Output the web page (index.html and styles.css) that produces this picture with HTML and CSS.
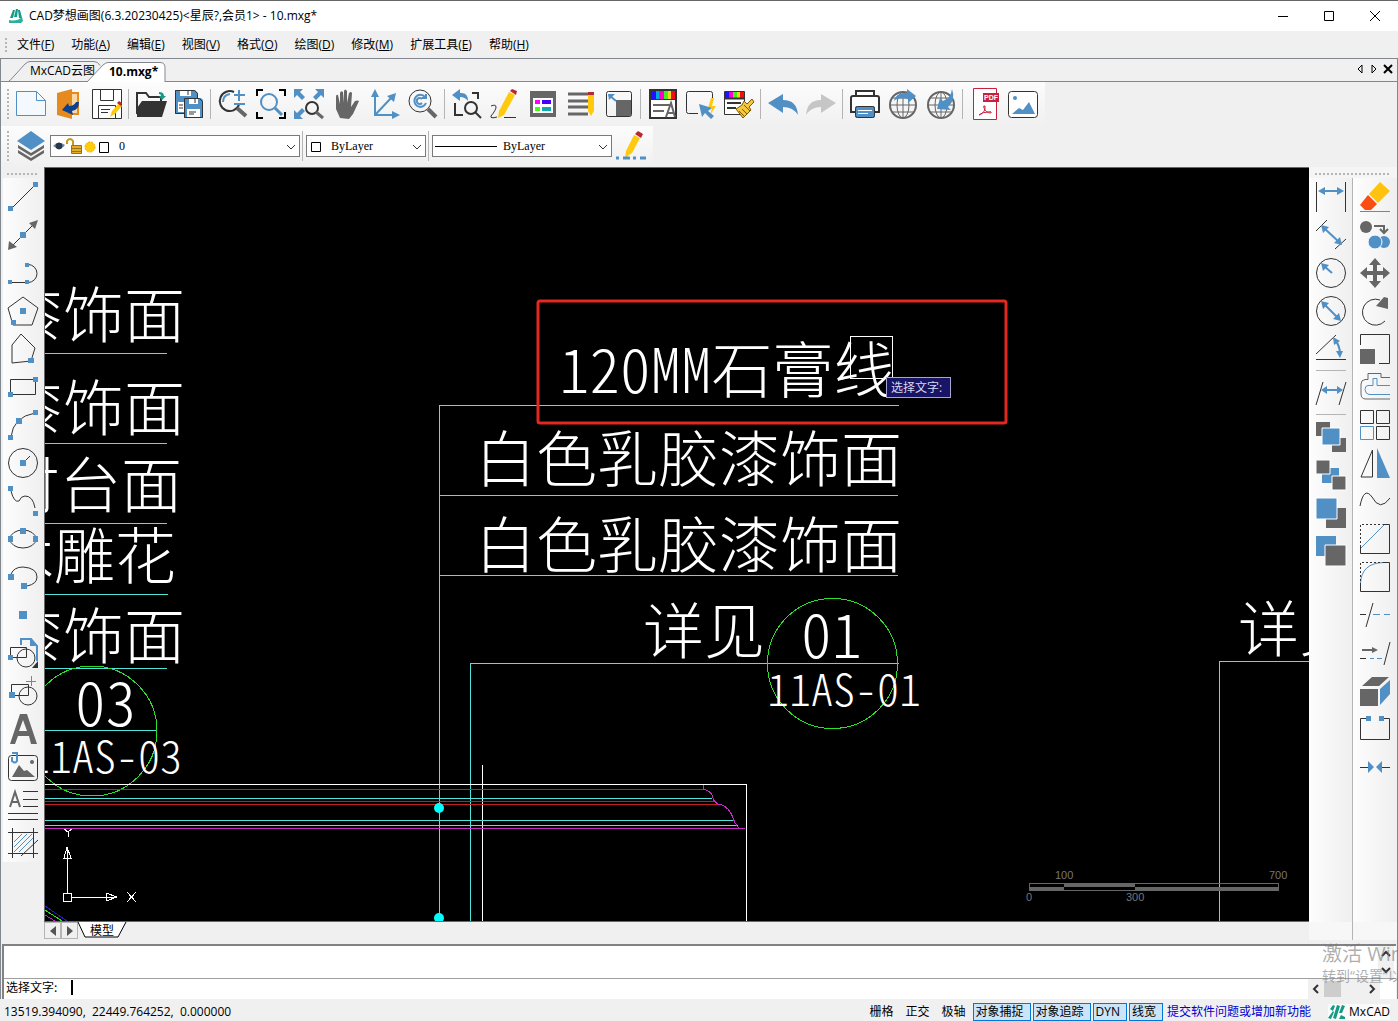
FILE: index.html
```
<!DOCTYPE html>
<html lang="zh-CN">
<head>
  <meta charset="UTF-8">
  <meta name="viewport" content="width=device-width, initial-scale=1.0">
  <title>CAD梦想画图</title>
  <link rel="stylesheet" href="styles.css">
</head>
<body>
  <header class="titlebar">
    <svg class="logo" viewBox="0 0 16 16"><path class="teal" d="M2 10 5 2h2L5 10zM6 9 8 1h2L9 9zM10 2h2l2 8h-3z"/><path class="teal-dark" d="M1 12q8 2 13-3l1 4-2 2H1z"/></svg>
    <h1>CAD梦想画图(6.3.20230425)&lt;星辰?,会员1&gt; - 10.mxg*</h1>
    <div class="window-btns">
      <button title="最小化"><svg viewBox="0 0 12 12"><path d="M1 6.500h10"/></svg></button>
      <button title="最大化"><svg viewBox="0 0 12 12"><path d="M1.500 1.500h9v9h-9z"/></svg></button>
      <button title="关闭"><svg viewBox="0 0 12 12"><path d="m1 1 10 10M11 1 1 11"/></svg></button>
    </div>
  </header>

  <nav class="menubar">
    <span class="grip"></span>
    <button>文件(<u>F</u>)</button>
    <button>功能(<u>A</u>)</button>
    <button>编辑(<u>E</u>)</button>
    <button>视图(<u>V</u>)</button>
    <button>格式(<u>O</u>)</button>
    <button>绘图(<u>D</u>)</button>
    <button>修改(<u>M</u>)</button>
    <button>扩展工具(<u>E</u>)</button>
    <button>帮助(<u>H</u>)</button>
  </nav>

  <div class="frame">
    <div class="tabs">
      <button class="tab"><svg viewBox="0 0 92 20"><path d="M0 19.500h1L16 3q3-2.500 5-2.500h64q4 0 6 4"/></svg><span>MxCAD云图</span></button>
      <button class="tab active"><svg viewBox="0 0 80 20"><path d="M0 20 16 3q3-2.500 5-2.500h52q5 0 5 5V20"/></svg><span>10.mxg*</span></button>
      <div class="tab-nav">
        <button title="上一个"><svg viewBox="0 0 8 10"><path d="M6 1v8L2 5z"/></svg></button>
        <button title="下一个"><svg viewBox="0 0 8 10"><path d="M2 1v8l4-4z"/></svg></button>
        <button title="关闭"><svg viewBox="0 0 8 10"><path class="thick" d="m0 1 8 8M8 1 0 9"/></svg></button>
      </div>
    </div>

    <!-- main toolbar -->
    <div class="toolbar main-tools">
      <span class="grip"></span>
      <button title="新建"><svg viewBox="0 0 30 30"><path class="blue paper" d="M.5 2.500h20l9 9v15H.5zM20.500 2.500v9h9"/></svg></button>
      <button title="打开图纸"><svg viewBox="0 0 30 30"><path d="M18 4h6v21h-6" stroke="#e58a1f" fill="#fbd9a5" stroke-width="2"/><path class="orange" d="M3 4 18 0v30L3 26z"/><path class="navy" d="M25 13q0 8-7 9l1 4-11-5 6-7 1 3q5 0 7-4z"/></svg></button>
      <button title="另存为"><svg viewBox="0 0 30 30"><path fill="#fff" d="M.5.500h29v29H.5z"/><path d="M8.500.500v11h13V.500M6.500 29.500v-13h17v13M9 20.500h9M9 23.500h7"/><path class="yellow" d="m18 28 2-6 7-8 3 3-7 8z"/><path class="red" d="m25 14 2-2 3 2-1 3z"/></svg></button>
      <i class="sep"></i>
      <button title="打开"><svg viewBox="0 0 30 30"><path d="M1 25V4h9l3 4h12v5" stroke-width="2"/><path class="black-fill" d="M6 12h25l-5 16H1V19z"/><path class="teal" d="M23 3q5 0 5 4h2l-4 4-3-4h2q0-2-2-2z"/></svg></button>
      <button title="保存"><svg viewBox="0 0 30 30"><path class="blue-fill" d="M1 1h20l3 3v21H1z"/><path class="blue-fill" stroke="#fff" d="M10 9h17l2 2v18H10z"/><path class="white-fill" d="M6 1h11v6H6zM4 13h7v10H4zM15 9h9v6h-9zM13 20h13v8H13z"/><path d="M1.500 1.500h19l3 3V9M1.500 1.500v23H10M10.500 9.500h15l3 3v16h-18zM14 1v5M21 10v4M15 23h7M15 25h5M5 16h4M5 19h4"/></svg></button>
      <i class="sep"></i>
      <button title="缩放"><svg viewBox="0 0 30 30"><path d="M21 16a10 10 0 1 1-5-13" stroke-width="2"/><path class="blue" d="M5 13q0-7 7-8" stroke-width="2"/><path class="blue" d="M16 6h11M21 1v11M16 15h11" stroke-width="2"/><path class="grey" d="m19 19 9 8" stroke-width="4"/></svg></button>
      <button title="窗口缩放"><svg viewBox="0 0 30 30"><path d="M1 7V1h6M23 1h6v6M29 23v6h-6M7 29H1v-6" stroke="#000" stroke-width="2"/><circle class="blue" cx="13" cy="13" r="8" stroke-width="2"/><path class="blue" d="m19 19 7 7" stroke-width="3"/></svg></button>
      <button title="全部缩放"><svg viewBox="0 0 30 30"><path class="blue-fill" d="M0 0h9L6 3l5 5-3 3-5-5-3 3zM30 0v9l-3-3-5 5-3-3 5-5-3-3zM0 30v-9l3 3 5-5 3 3-5 5 3 3z"/><circle cx="18" cy="19" r="6" stroke-width="2"/><path class="grey" d="m22 23 7 6" stroke-width="3"/></svg></button>
      <button title="平移"><svg viewBox="0 0 30 30"><path class="grey-fill" d="M8 29 4 20V8q0-3 2-2l2 9V4q1-3 3-1l1 11V2q1-3 3 0v12l2-10q2-2 3 0l-1 14 4-6q3-1 4 0l-6 13-4 5z"/></svg></button>
      <button title="坐标"><svg viewBox="0 0 30 30"><path class="blue" d="M5 6v20h19M5 26 22 8" stroke-width="2"/><path class="blue-fill" d="m5 0 4 8H1zM30 26l-8 4v-8zM26 4l-2 9-7-6z"/></svg></button>
      <button title="缩放上一个"><svg viewBox="0 0 30 30"><circle cx="12" cy="12" r="11"/><path class="grey" d="m20 20 8 8" stroke-width="4"/><path class="blue" d="M18 14a6 6 0 1 1-1-6M14 14a3 3 0 1 1 0-4M18 5v4h-4" stroke-width="2"/></svg></button>
      <i class="sep"></i>
      <button title="返回视图"><svg viewBox="0 0 30 30"><path class="blue-fill" d="m0 6 8-6v4q8-1 8 8-3-4-8-4v4z"/><path d="M3 14v12h8M20 4h6v6" stroke-width="2"/><circle cx="19" cy="19" r="6" stroke-width="2"/><path d="m23 23 6 6" stroke-width="2"/></svg></button>
      <button title="编辑"><svg viewBox="0 0 30 30"><path class="yellow" d="m19 3 6 3-11 20-6 3 1-7z"/><path class="red" d="m20 2 2-2 5 2-1 4z"/><path d="M1 17q5-2 5 1T1 27q-1 3 6 1M14 28.500h12"/></svg></button>
      <button title="特性"><svg viewBox="0 0 30 30"><path class="grey-fill" d="M2 2h26v26H2z"/><path class="white-fill" d="M5 9h20v15H5z"/><path fill="#f0f" stroke="none" d="M7 11h5v4H7z"/><path fill="#40f" stroke="none" d="M14 11h9v4h-9z"/><path fill="#4f1" stroke="none" d="M7 18h5v4H7z"/><path fill="#1aa" stroke="none" d="M14 18h9v4h-9z"/></svg></button>
      <button title="线型"><svg viewBox="0 0 30 30"><path class="grey" d="M2 5h20M2 12h20M2 18h20M2 25h20" stroke-width="3"/><path class="yellow" d="M22 6h6v16l-3 5-3-5z"/><path class="red" d="M22 3h6v3h-6z"/></svg></button>
      <button title="比例"><svg viewBox="0 0 30 30"><rect x="2.500" y="2.500" width="25" height="25" rx="2"/><path class="grey-fill" d="M12 11h15v16H12z"/><path class="blue" d="m5 6 7 6" stroke-width="2"/><path class="blue-fill" d="M4 5h7l-6 6z"/></svg></button>
      <i class="sep"></i>
      <button title="文字样式"><svg viewBox="0 0 30 30"><path fill="#fff" stroke-width="2" d="M2 1h26v28H2z"/><path fill="#21f" stroke="none" d="M3 2h5v8H3z"/><path fill="#0ad" stroke="none" d="M8 2h3v8H8z"/><path fill="#f0c" stroke="none" d="M11 2h5v8h-5z"/><path fill="#4e2" stroke="none" d="M16 2h4v8h-4z"/><path fill="#ed1" stroke="none" d="M20 2h3v8h-3z"/><path fill="#e11" stroke="none" d="M23 2h4v8h-4z"/><path d="M2 10.500h26"/><path class="grey" stroke-width="2" d="M5 16h18M5 22h11M18 28l5-14 4 14M20 24h5"/></svg></button>
      <button title="快速选择"><svg viewBox="0 0 30 30"><path d="M12 24.500H2.500q-2 0-2-2v-18q0-2 2-2h22q2 0 2 2V10"/><path class="yellow" d="m25 9-3 10h4l-2 7 6-9h-4l2-8z"/><path class="blue-fill" d="m13 15 13 4-4 3 6 5-3 3-6-6-3 4z"/></svg></button>
      <button title="特性匹配"><svg viewBox="0 0 30 30"><path fill="#fff" d="M.5 2.500h20v23H.5z"/><path fill="#21f" stroke="none" d="M1 3h4v6H1z"/><path fill="#f0c" stroke="none" d="M5 3h4v6H5z"/><path fill="#4e2" stroke="none" d="M9 3h4v6H9z"/><path fill="#ed1" stroke="none" d="M13 3h3v6h-3z"/><path fill="#e11" stroke="none" d="M16 3h4v6h-4z"/><path d="M0 9.500h21M3 14h14M3 19h9" stroke-width="2"/><path fill="#f5c83c" stroke="#7c5900" d="m12 20 6-4 2-4 3 3 5-5 2 3-5 5 2 3-8 8zm3 2 5 5m-2-7 5 5m-3-9 6 6"/></svg></button>
      <i class="sep"></i>
      <button title="撤销"><svg viewBox="0 0 30 30"><path class="blue-fill" d="M0 14 15 5v6q14 0 15 15-5-8-15-8v6z"/></svg></button>
      <button title="重做"><svg viewBox="0 0 30 30"><path fill="#c6c6c6" stroke="none" d="M30 14 15 5v6Q1 11 0 26q5-8 15-8v6z"/></svg></button>
      <i class="sep"></i>
      <button title="打印"><svg viewBox="0 0 30 30"><path fill="#fff" stroke-width="2" d="M6 7V2h18v5M6 23H1V9q0-2 2-2h24q2 0 2 2v14h-5"/><rect class="blue-fill" x="5" y="17" width="20" height="12" rx="2"/><rect x="5.500" y="17.500" width="19" height="11" rx="2"/><path stroke="#fff" d="M8 21.500h14M8 24.500h10"/></svg></button>
      <button title="上传"><svg viewBox="0 0 30 30"><g class="grey"><circle cx="15" cy="16" r="13" stroke-width="2"/><ellipse cx="15" cy="16" rx="6" ry="13"/><path d="M15 3v26M2 16h26M4 9h22M4 23h22"/></g><path class="blue-fill" d="M6 12q2-9 13-8V0l9 7-8 7v-4Q10 8 6 12z"/></svg></button>
      <button title="下载"><svg viewBox="0 0 30 30"><g class="grey"><circle cx="15" cy="16" r="13" stroke-width="2"/><ellipse cx="15" cy="16" rx="6" ry="13"/><path d="M15 3v26M2 16h26M4 9h22M4 23h22"/></g><path class="blue-fill" d="M26 0q4 11-4 18l3 3-14-1 3-11 3 3q8-3 9-12z"/></svg></button>
      <i class="sep"></i>
      <button title="输出PDF"><svg viewBox="0 0 30 30"><path fill="#fff" stroke="#c8203f" d="M3.500-.5h23v31h-23z"/><path fill="#c8203f" stroke="none" d="M13 4h16v9H13z"/><text x="14" y="11">PDF</text><path stroke="#c8203f" d="M9 26q7-3 6-9-2-1-1 2 2 5 7 5 1-2-3-1-5 0-9 3z"/></svg></button>
      <button title="输出图片"><svg viewBox="0 0 30 30"><rect x=".5" y="2.500" width="29" height="26" rx="3" fill="#fff"/><circle class="blue-fill" cx="7" cy="9" r="2"/><path class="blue-fill" d="m4 25 7-6 4 2 6-8 6 12z"/></svg></button>
    </div>

    <!-- layer, colour and line type -->
    <div class="toolbar layer-tools">
      <span class="grip"></span>
      <button title="图层"><svg viewBox="0 0 30 30"><path class="grey-fill" d="m2 19 13 8 13-8v3l-13 8-13-8zM2 14l13 8 13-8v3l-13 8-13-8z"/><path class="blue-fill" d="M15 0 29 10 15 19 1 10z"/></svg></button>
      <div class="combo combo-layer">
        <svg class="combo-icons" viewBox="0 0 60 20"><path fill="#6d8aa9" stroke="none" d="M2 10q5-6 12-1-5 7-12 1z"/><circle cx="8" cy="10" r="3" fill="#223a58"/><path stroke="#c39a22" stroke-width="2" d="M16 8V5q3-4 6 0v5"/><path fill="#e4ad25" stroke="#9a7411" d="M20.500 9.500h10v8h-10zM20 12.500h10M20 15.500h10"/><circle cx="39" cy="11" r="5" fill="#ffcc0c" stroke="#f2a900" stroke-dasharray="2 1"/><path fill="#fff" stroke="#000" d="M48.500 6.500h9v10h-9z"/></svg>
        <select aria-label="图层"><option>0</option></select>
        <svg class="arrow" viewBox="0 0 10 6"><path d="m1 1 4 4 4-4"/></svg>
      </div>
      <i class="sep"></i>
      <div class="combo combo-color">
        <svg class="combo-icons" viewBox="0 0 60 20"><path stroke="#000" d="M4.500 6.500h9v9h-9z"/></svg>
        <select aria-label="颜色"><option>ByLayer</option></select>
        <svg class="arrow" viewBox="0 0 10 6"><path d="m1 1 4 4 4-4"/></svg>
      </div>
      <i class="sep"></i>
      <div class="combo combo-line">
        <svg class="combo-icons" viewBox="0 0 64 20"><path stroke="#000" d="M2 10.500h62"/></svg>
        <select aria-label="线型"><option>ByLayer</option></select>
        <svg class="arrow" viewBox="0 0 10 6"><path d="m1 1 4 4 4-4"/></svg>
      </div>
      <button title="线型编辑"><svg viewBox="0 0 30 30"><path class="yellow" d="m18 4 6 3-8 15-7 5 1-7z"/><path class="red" d="m19 3 3-3 5 3-2 4z"/><path class="blue" stroke-width="3" stroke-dasharray="3 4 7 3" d="M0 27h30"/></svg></button>
    </div>

    <main class="work">
      <!-- drawing tools -->
      <aside class="side side-left">
        <span class="grip-h"></span>
        <div class="col">
          <button title="直线"><svg viewBox="0 0 30 30"><path d="M4 26 26 4"/><path class="blue-fill" d="M0 24h5v5H0zM25 0h5v5h-5z"/></svg></button>
          <button title="构造线"><svg viewBox="0 0 30 30"><path d="M4 26 26 4"/><path class="grey-fill" d="m30 0-3 9-6-6zM0 30l1-9 8 6z"/><path class="blue-fill" d="M12 12h6v6h-6z"/></svg></button>
          <button title="多段线"><svg viewBox="0 0 30 30"><path d="M3 24.500h17a9 9 0 0 0 0-18"/><path class="blue-fill" d="M0 22h4v4H0zM17 22h4v4h-4zM17 5h4v4h-4z"/></svg></button>
          <button title="正多边形"><svg viewBox="0 0 30 30"><path d="M15 1 30 12 24 29H5L0 12z"/><path class="blue-fill" d="M12 12h6v6h-6zM3 24h5v5H3z"/></svg></button>
          <button title="多边形"><svg viewBox="0 0 30 30"><path d="M13 0 27 14 23 27 4 29V11z"/><path class="blue-fill" d="M20 24h6v5h-6z"/></svg></button>
          <button title="矩形"><svg viewBox="0 0 30 30"><path d="M2.500 7.500h25v15h-25z"/><path class="blue-fill" d="M0 20h5v5H0zM25 5h5v5h-5z"/></svg></button>
          <button title="圆弧"><svg viewBox="0 0 30 30"><path d="M3 27Q5 7 27 3"/><path class="blue-fill" d="M0 25h5v5H0zM8 8h6v6H8zM25 0h5v5h-5z"/></svg></button>
          <button title="圆"><svg viewBox="0 0 30 30"><circle cx="15" cy="15" r="14.500"/><path d="m15 15 7-7"/><path class="blue-fill" d="M12 12h6v6h-6z"/></svg></button>
          <button title="样条曲线"><svg viewBox="0 0 30 30"><path d="M3 5q3 12 8 10 2-5 6-5 8 0 10 12"/><path class="blue-fill" d="M0 0h5v5H0zM25 25h5v5h-5z"/></svg></button>
          <button title="椭圆"><svg viewBox="0 0 30 30"><ellipse cx="15" cy="15" rx="13" ry="9"/><path class="blue-fill" d="M12 4h6v6h-6zM0 12h5v6H0zM25 12h5v6h-5z"/></svg></button>
          <button title="椭圆弧"><svg viewBox="0 0 30 30"><path d="M3 12q3-7 12-7 14 1 14 10 0 7-10 9"/><path class="blue-fill" d="M0 12h6v6H0zM13 21h6v6h-6z"/></svg></button>
          <button title="点"><svg viewBox="0 0 30 30"><path class="blue-fill" d="M11 11h8v8h-8z"/></svg></button>
          <button title="插入块"><svg viewBox="0 0 30 30"><path class="blue" stroke-width="2" d="M13 7V1h10l6 7v15"/><path class="blue-fill" d="M22 0v8h8z"/><path d="M2.500 9.500h16v10h-16z"/><circle cx="18" cy="20" r="9"/><path class="blue-fill" d="M0 17h5v5H0z"/><path class="black-fill" d="m30 23-6 7h6z"/></svg></button>
          <button title="创建块"><svg viewBox="0 0 30 30"><path d="M3.500 8.500h17v11h-17z"/><circle cx="20" cy="20" r="9"/><path class="blue" d="M23.500 0v10M18 5.500h10"/><path class="blue-fill" d="M1 16h6v6H1z"/></svg></button>
          <button title="单行文字"><svg viewBox="0 0 30 30"><path class="grey-fill" d="M12 0h7l10 30h-6l-2-8H10l-3 8H2zM15 6l-4 11h8z"/></svg></button>
          <button title="图片"><svg viewBox="0 0 30 30"><rect x=".5" y="3.500" width="29" height="25" rx="3"/><path class="grey-fill" d="m4 25 7-12 5 6 3-1 8 7z"/><circle class="grey-fill" cx="24" cy="10" r="2"/><path class="blue" stroke-width="2" d="M4 1h5v8q-2 3-5 0V5"/></svg></button>
          <button title="多行文字"><svg viewBox="0 0 30 30"><path class="grey" stroke-width="2" d="M2 17 7 2l5 15M4 12h7"/><path d="M15 1.500h15M15 9.500h15M15 16.500h15M0 23.500h30M0 29.500h30"/></svg></button>
          <button title="填充"><svg viewBox="0 0 30 30"><path class="blue" d="m6 14 8-8M6 19 19 6M6 24 24 6M11 24 25 10"/><path d="M4.500 0v30M25.500 0v30M0 4.500h30M0 25.500h30M13 28l17-16"/></svg></button>
        </div>
      </aside>

      <section class="canvas">
        <svg class="drawing">
          
          <g transform="translate(-45 -168)">
            <g class="lines">
              <path class="cyan" d="M45 353.500h122M45 443.500h122M45 523.500h122M45 594.500h123M45 668.500h122M45 730.500h111"/>
              <path class="cyan" d="M439.500 921V405.500h459M439 495.500h459M439 575.500h459M470.500 921V663.500h428M1219.500 921V661.500h400"/>
              <circle class="green" cx="92" cy="731" r="65"/>
              <circle class="green" cx="832.500" cy="663.500" r="65"/>
              <path class="white" d="M45 784.500h701.500v137M482.500 765v156"/>
              <path class="crimson" d="M45 789.500h659M45 801.500h669M45 804.500h673"/>
              <path class="cyan" d="M45 798.500h667M45 820.500h688M45 825.500h693"/>
              <path class="magenta" d="M45 828.500h700M703.500 785v4q9 2 10 11l4 4q12 1 17 18l4 6"/>
              <path class="blue-line" d="m45 906 22 15"/><path class="green" d="m45 910 17 11"/><path class="magenta" d="m45 915 10 6"/>
            </g>
            <g class="nodes"><circle cx="439" cy="808" r="5"/><circle cx="439" cy="918" r="5"/></g>
            <g class="note">
              <text x="2" y="338">漆饰面</text>
              <text x="2" y="431">漆饰面</text>
              <text x="-1" y="508">付台面</text>
              <text x="-7" y="579">木雕花</text>
              <text x="2" y="659">漆饰面</text>
              <text x="559" y="393">120MM石膏线</text>
              <text x="475" y="482">白色乳胶漆饰面</text>
              <text x="475" y="568">白色乳胶漆饰面</text>
              <text x="643" y="654">详见</text>
              <text x="1238" y="652">详见</text>
              <text x="75" y="726">03</text>
              <text x="801" y="658">01</text>
            </g>
            <g class="note sheet">
              <text x="28" y="773">11AS-03</text>
              <text x="767" y="706">11AS-01</text>
            </g>
            <g class="lines white">
              <path d="M63.500 893.500h8v8h-8zM67.500 893v-36M72 897.500h35"/>
              <path d="m64 858 3-11 4 11zM67.500 848v10M106 893l11 4-11 4zM106 897.500h11M64 829l4 3 4-3M68 832v5M127 892l9 10M136 892l-9 10"/>
            </g>
            <path class="pick" d="M850.500 336.500h42v42h-42z"/>
            <rect class="mark" x="538" y="301" width="468" height="122" rx="2"/>
          </g>
        </svg>
        <div class="tip">选择文字:</div>
        <svg class="scale" viewBox="0 0 270 40">
          <path d="M7.500 14.500h249v7h-249z"/>
          <path class="bar" d="M7 18h35v4H7zM42 14h71v4H42zM113 18h144v4H113z"/>
          <text x="33" y="10">100</text><text x="247" y="10">700</text><text x="4" y="32">0</text><text x="104" y="32">300</text>
        </svg>
      </section>

      <!-- dimension and modify tools -->
      <aside class="side side-right">
        <span class="grip-h"></span>
        <div class="cols">
          <div class="col col-dim">
            <button title="线性标注"><svg viewBox="0 0 30 30"><path d="M.5 0v30M29.500 0v30"/><path class="blue" stroke-width="2" d="M6 9h18"/><path class="blue-fill" d="m2 9 7-4v8zM28 9l-7-4v8z"/></svg></button>
            <button title="对齐标注"><svg viewBox="0 0 30 30"><path d="M0 11 11 0M19 29l11-10"/><path class="blue" stroke-width="2" d="m8 8 15 14"/><path class="blue-fill" d="m5 5 8 2-6 6zM26 25l-8-2 6-6z"/></svg></button>
            <button title="半径标注"><svg viewBox="0 0 30 30"><circle cx="15" cy="15" r="14.500"/><path class="blue" stroke-width="2" d="m8 8 8 7"/><path class="blue-fill" d="m5 5 8 2-6 6z"/></svg></button>
            <button title="直径标注"><svg viewBox="0 0 30 30"><circle cx="15" cy="15" r="14.500"/><path class="blue" stroke-width="2" d="m8 8 14 14"/><path class="blue-fill" d="m5 5 8 2-6 6zM25 25l-8-2 6-6z"/></svg></button>
            <button title="角度标注"><svg viewBox="0 0 30 30"><path d="M0 20 20 1M0 25.500h30"/><path class="blue" stroke-width="2" d="M19 6q5 6 5 14"/><path class="blue-fill" d="m17 3 7 4-6 4zM24 24l-4-7h7z"/></svg></button>
            <i class="sep-h"></i>
            <button title="倾斜标注"><svg viewBox="0 0 30 30"><path d="M0 27 7 4M23 27l7-23"/><path class="blue" stroke-width="2" d="M8 12h16"/><path class="blue-fill" d="m5 12 6-4v8zM27 12l-6-4v8z"/></svg></button>
            <i class="sep-h"></i>
            <button title="前置"><svg viewBox="0 0 30 30"><path class="grey-fill" d="M0 0h14v14H0zM16 16h14v14H16z"/><path fill="#5090c5" stroke="#fff" d="M6 6h18v17H6z"/></svg></button>
            <button title="后置"><svg viewBox="0 0 30 30"><path class="blue-fill" d="M6 8h17v15H6z"/><path fill="#666" stroke="#fff" d="M0 0h14v14H0zM16 16h14v14H16z"/></svg></button>
            <button title="置于对象之上"><svg viewBox="0 0 30 30"><path class="grey-fill" d="M10 10h20v20H10z"/><path fill="#5090c5" stroke="#fff" d="M0 0h21v21H0z"/></svg></button>
            <button title="置于对象之下"><svg viewBox="0 0 30 30"><path class="blue-fill" d="M0 0h20v20H0z"/><path fill="#666" stroke="#fff" d="M9 9h21v21H9z"/></svg></button>
          </div>
          <div class="col">
            <button title="删除"><svg viewBox="0 0 30 30"><path fill="#ffc20e" stroke="none" d="M20 0 30 9 18 21 9 12z"/><path fill="#fa4d12" stroke="none" d="m8 13 9 9-6 6H5l-5-5z"/><path class="blue" d="M0 29.500h30"/></svg></button>
            <button title="复制"><svg viewBox="0 0 30 30"><circle class="grey-fill" cx="6" cy="7" r="6"/><path d="M14 6h10v7M20 9l4 4 4-4" stroke-width="2" stroke="#666"/><circle class="blue-fill" cx="24" cy="22" r="6"/><circle cx="15" cy="22" r="7" fill="#5090c5" stroke="#fff"/></svg></button>
            <button title="移动"><svg viewBox="0 0 30 30"><path class="grey-fill" d="m15 0 6 7h-4v6h6V9l7 6-7 6v-4h-6v6h4l-6 7-6-7h4v-6H7v4l-7-6 7-6v4h6V7H9z"/></svg></button>
            <button title="旋转"><svg viewBox="0 0 30 30"><path d="M20 4A13 13 0 1 0 25 25"/><path class="grey-fill" d="m16 10 8-9 4 1v11z"/></svg></button>
            <button title="缩放"><svg viewBox="0 0 30 30"><path class="grey-fill" d="M0 15h15v15H0z"/><path d="M.5 11V.500h29v29H19"/></svg></button>
            <button title="偏移"><svg viewBox="0 0 30 30"><path class="grey" d="M30 5.500h-9v-4H8v6H5Q1 8 1 12v10q0 5 5 5h24"/><path class="blue" d="M30 13.500H17v-7h-4v7H8q-3 0-3 4t4 5h21"/></svg></button>
            <button title="阵列"><svg viewBox="0 0 30 30"><path d="M.5.500h13v13H.5zM16.500.500h13v13h-13zM16.500 16.500h13v13h-13z"/><path class="blue" d="M.5 16.500h13v13H.5z"/></svg></button>
            <button title="镜像"><svg viewBox="0 0 30 30"><path d="M12.500 2v27H1z"/><path class="blue-fill" d="M17 0v30h13z"/></svg></button>
            <button title="曲线"><svg viewBox="0 0 30 30"><path d="M0 20Q4 0 12 11q8 15 18 1"/></svg></button>
            <button title="倒角"><svg viewBox="0 0 30 30"><path class="blue" d="M1 24 24 1"/><path stroke-dasharray="2 2" d="M.5 23V.500h22"/><path d="M23 .5h6.500v29H.5V23"/></svg></button>
            <button title="圆角"><svg viewBox="0 0 30 30"><path class="blue" d="M.5 22Q1 1 24 .5"/><path stroke-dasharray="2 2" d="M.5 23V.500h22"/><path d="M23 .5h6.500v29H.5V23"/></svg></button>
            <button title="修剪"><svg viewBox="0 0 30 30"><path d="M0 14.500h6M6 27l7-24"/><path class="blue" d="M13 14.500h7M24 14.500h6"/></svg></button>
            <button title="延伸"><svg viewBox="0 0 30 30"><path d="M0 20.500h6M24 27l6-23"/><path class="blue" d="M10 20.500h4M17 20.500h5"/><path class="grey" stroke-width="2" d="M2 12h12"/><path class="grey-fill" d="m12 9 6 3-6 3z"/></svg></button>
            <button title="三维"><svg viewBox="0 0 30 30"><path class="grey-fill" d="M0 13h18v17H0zM2 10l10-9h17l-10 9z"/><path class="blue-fill" d="m20 13 10-9v14L20 29z"/></svg></button>
            <button title="打断"><svg viewBox="0 0 30 30"><path d="M7 4.500H.5v21h29v-21H23"/><path class="blue-fill" d="M6 2h5v5H6zM19 2h5v5h-5z"/></svg></button>
            <button title="合并"><svg viewBox="0 0 30 30"><path d="M0 15.500h9M21 15.500h9"/><path class="blue-fill" d="m8 9 6 6-6 6zM22 9l-6 6 6 6z"/></svg></button>
          </div>
        </div>
      </aside>
    </main>

    <div class="model-tabs">
      <button class="nav" title="左"><svg viewBox="0 0 8 10"><path d="M7 0v10L1 5z"/></svg></button>
      <button class="nav" title="右"><svg viewBox="0 0 8 10"><path d="M1 0v10l6-5z"/></svg></button>
      <button class="model"><svg viewBox="0 0 48 16"><path d="m0 0 7 15h33l8-15"/></svg><span>模型</span></button>
      <span class="side-foot"></span>
    </div>

    <section class="command">
      <textarea class="history" readonly aria-label="命令历史"></textarea>
      <div class="prompt">
        <label for="cmd">选择文字:</label>
        <input type="text" id="cmd">
        <div class="scroll-h">
          <button title="左"><svg viewBox="0 0 6 8"><path d="M5 0 1 4l4 4"/></svg></button>
          <span class="thumb"></span>
          <button class="right" title="右"><svg viewBox="0 0 6 8"><path d="m1 0 4 4-4 4"/></svg></button>
        </div>
      </div>
      <div class="scroll-v">
        <button title="上"><svg viewBox="0 0 8 6"><path d="m0 5 4-4 4 4"/></svg></button>
        <button title="下"><svg viewBox="0 0 8 6"><path d="m0 1 4 4 4-4"/></svg></button>
      </div>
    </section>
  </div>

  <footer class="status">
    <output>13519.394090,&nbsp; 22449.764252,&nbsp; 0.000000</output>
    <div class="modes">
      <button>栅格</button>
      <button>正交</button>
      <button>极轴</button>
      <button class="on">对象捕捉</button>
      <button class="on">对象追踪</button>
      <button class="on">DYN</button>
      <button class="on">线宽</button>
    </div>
    <a href="#">提交软件问题或增加新功能</a>
    <div class="brand"><svg viewBox="0 0 18 16"><path class="teal" d="m0 14 5-7 1 1-3 7zM5 14 9 1l3 1-4 13zM2 5l3-4 2 1-2 5zM11 9l3-8 3 1-3 7zM11 15l2-4 4 2v2z"/></svg>MxCAD</div>
  </footer>

  <div class="watermark"><p>激活 Windows</p><p class="small">转到“设置”以激活 Windows。</p></div>
</body>
</html>
```
FILE: styles.css
```
:root {
  --blue: #5090c5;
  --grey: #666;
  --line: #828790;
  --face: #f0f0f0;
}
* { box-sizing: border-box; }
body {
  margin: 0;
  height: 100vh;
  display: flex;
  flex-direction: column;
  overflow: hidden;
  position: relative;
  background: var(--face);
  color: #000;
  font: 12px/16px "Open Sans", "Noto Sans CJK SC", sans-serif;
}
button {
  border: none;
  background: none;
  padding: 0;
  color: inherit;
  font: inherit;
}
svg { display: block; fill: none; stroke: #333; overflow: visible; }

/* icon colours */
.blue { stroke: var(--blue); }
.grey { stroke: var(--grey); }
.paper { fill: #f4f9ff; }
.blue-fill { fill: var(--blue); stroke: none; }
.grey-fill { fill: var(--grey); stroke: none; fill-rule: evenodd; }
.black-fill { fill: #333; stroke: none; }
.white-fill { fill: #fff; stroke: none; }
.yellow { fill: #ffc90e; stroke: none; }
.red { fill: #b8292f; stroke: none; }
.orange { fill: #e58a1f; stroke: none; }
.navy { fill: #0d418f; stroke: none; }
.teal { fill: #159b85; stroke: none; }
.teal-dark { fill: #2bb09b; stroke: none; }

/* title and menu */
.titlebar {
  display: flex;
  align-items: center;
  height: 31px;
  padding-left: 8px;
  background: #fff;
  border-top: 1px solid #666;
}
.logo { width: 16px; height: 16px; margin-right: 5px; }
.titlebar h1 { margin: 0; font-size: 12px; font-weight: 400; flex: 1; }
.window-btns button { width: 46px; height: 30px; }
.window-btns { display: flex; }
.window-btns svg { width: 12px; height: 12px; margin: auto; stroke: #000; }
.menubar {
  display: flex;
  align-items: center;
  gap: 17px;
  height: 27px;
  padding-left: 5px;
}
.menubar .grip { margin-right: -7px; height: 14px; }
.grip {
  width: 2px;
  height: 30px;
  background: repeating-linear-gradient(#b5b5b5 0 2px, transparent 2px 4px);
}
.grip-h {
  display: block;
  height: 2px;
  margin: 6px 6px 3px;
  background: repeating-linear-gradient(90deg, #b5b5b5 0 2px, transparent 2px 4px);
}

.frame {
  flex: 1;
  min-height: 0;
  display: flex;
  flex-direction: column;
  border: 1px solid var(--line);
  border-bottom: none;
}
.tabs {
  display: flex;
  align-items: flex-end;
  height: 23px;
  padding-left: 8px;
  border-bottom: 1px solid var(--line);
}
.tab { position: relative; width: 92px; height: 20px; text-align: left; padding-left: 21px; white-space: nowrap; }
.tab svg { position: absolute; left: 0; top: 0; width: 100%; height: 20px; stroke: var(--line); }
.tab span { position: relative; }
.tab.active { width: 80px; margin: 0 0 -1px -14px; padding-left: 22px; font-weight: 700; }
.tab.active svg { fill: #fff; }
.tab-nav { display: flex; gap: 6px; margin-left: auto; padding: 0 5px 7px; }
.tab-nav svg { width: 8px; height: 10px; stroke: #000; }
.thick { stroke-width: 2; }

/* toolbars */
.toolbar {
  display: flex;
  align-items: center;
  align-self: flex-start;
  background: linear-gradient(#fcfcfc, #f0f0f0);
  padding: 0 3px 0 6px;
}
.toolbar button { width: 38px; height: 38px; }
.toolbar button svg { width: 30px; height: 30px; margin: auto; }
.toolbar text { font: 700 7px "Liberation Sans", sans-serif; fill: #fff; stroke: none; }
.toolbar .grip { margin-right: 3px; }
.main-tools { height: 44px; }
.layer-tools { height: 41px; padding-bottom: 2px; }
.sep { width: 1px; height: 30px; margin: 0 3px 0 2px; background: #b5b5b5; }
.combo { position: relative; height: 22px; }
.combo-layer { width: 250px; }
.combo-color { width: 120px; }
.combo-line { width: 180px; }
.combo select {
  appearance: none;
  display: block;
  width: 100%;
  height: 22px;
  border: 1px solid #7a7a7a;
  border-radius: 0;
  background: #fff;
  color: #000;
  font: 12px "Liberation Serif", serif;
  padding: 0 20px 0 24px;
}
.combo-layer select { padding-left: 68px; }
.combo-line select { padding-left: 70px; }
.combo-icons { position: absolute; left: 1px; top: 1px; height: 20px; width: 60px; }
.combo-line .combo-icons { width: 64px; }
.arrow { position: absolute; right: 4px; top: 9px; width: 10px; height: 6px; }

/* work area */
.work { flex: 1; min-height: 0; display: flex; }
.side { width: 43px; }
.side-right { width: 88px; background: #f5f5f5; display: flex; flex-direction: column; }
.side .col { background: linear-gradient(90deg, #fdfdfd, #efefef); margin: 0 1px 0 2px; padding-left: 1px; }
.side button { display: block; width: 38px; height: 38px; }
.side button svg { width: 30px; height: 30px; margin: auto; }
.side-right .cols { display: flex; flex: 1; }
.side-right .col { margin: 0; width: 44px; padding-left: 3px; }
.side-right .col-dim { border-right: 1px solid #b5b5b5; }
.sep-h { display: block; height: 1px; width: 30px; margin: 2px 4px 3px; background: #b5b5b5; }
.canvas {
  flex: 1;
  min-width: 0;
  position: relative;
  overflow: hidden;
  background: #000;
  border: 1px solid #696969;
  border-right: none;
}
.drawing { width: 100%; height: 100%; }
.drawing text { fill: #fff; stroke: none; }
.lines { shape-rendering: crispEdges; }
.cyan { stroke: #4fe3dc; }
.green { stroke: #2be02b; }
.white { stroke: #fff; }
.crimson { stroke: #c02020; }
.magenta { stroke: #c828c8; }
.blue-line { stroke: #2020c0; }
.nodes circle { fill: #0ff; stroke: none; }
.pick { stroke: #fff; shape-rendering: crispEdges; }
.mark { stroke: #e2291f; stroke-width: 3; }
.note {
  font: 300 61px "Noto Sans CJK SC", sans-serif;
  font-feature-settings: "hwid";
}
.sheet { font-size: 44px; }
.tip {
  position: absolute;
  left: 841px;
  top: 209px;
  padding: 0 8px 0 4px;
  border: 1px solid #a6a6d0;
  background: #191566;
  color: #d8d8f0;
  line-height: 19px;
}
.scale { position: absolute; right: 17px; bottom: 12px; width: 270px; height: 40px; stroke: var(--grey); shape-rendering: crispEdges; }
.scale .bar { fill: var(--grey); stroke: none; }
.scale text { font: 11px "Liberation Sans", sans-serif; fill: #777; stroke: none; }

.model-tabs { display: flex; height: 18px; padding-left: 43px; background: var(--face); }
.model-tabs .nav { width: 17px; height: 17px; border: 1px solid #b5b5b5; }
.nav svg { width: 8px; height: 10px; margin: auto; fill: #555; stroke: none; }
.model { position: relative; width: 48px; height: 17px; }
.model svg { position: absolute; left: 0; top: 0; width: 48px; height: 16px; fill: #fff; stroke: #000; }
.model span { position: relative; }
.side-foot { width: 88px; margin-left: auto; background: linear-gradient(90deg, #b5b5b5, #b5b5b5) 43px 0 / 1px 100% no-repeat #f7f7f7; }

/* command line */
.command {
  position: relative;
  height: 55px;
  margin: 4px 1px 0;
  border: 2px solid #828282;
  border-width: 2px 0 0 2px;
  background: #fff;
}
.history {
  display: block;
  width: 100%;
  height: 33px;
  border: none;
  border-bottom: 1px solid #a0a0a0;
  border-radius: 0;
  outline: none;
  resize: none;
  padding: 0;
}
.prompt { display: flex; align-items: flex-start; height: 20px; padding-left: 2px; }
.prompt label { font-family: "Noto Sans CJK SC", sans-serif; }
.prompt input {
  flex: 1;
  height: 15px;
  margin: 1px 0 0 14px;
  border: none;
  border-left: 2px solid #000;
  border-radius: 0;
  outline: none;
  padding: 0;
}
.scroll-h { display: flex; align-items: center; width: 72px; margin-right: 16px; background: var(--face); }
.scroll-h button { width: 16px; height: 20px; }
.scroll-h .right { margin-left: auto; }
.thumb { width: 17px; height: 16px; background: #cdcdcd; }
.scroll-h svg { width: 6px; height: 8px; margin: auto; stroke-width: 2; }
.scroll-v { position: absolute; right: 2px; top: 0; width: 16px; background: var(--face); }
.scroll-v button { display: block; width: 16px; height: 16px; }
.scroll-v svg { width: 8px; height: 6px; margin: auto; stroke-width: 2; }

.status { display: flex; align-items: center; height: 22px; padding: 3px 8px 0 4px; }
.status output { flex: 1; }
.modes { display: flex; align-items: center; gap: 2px; margin-right: 4px; }
.modes button { height: 18px; padding: 0 5px; line-height: 16px; }
.modes .on { border: 1px solid #0078d7; background: #cce4f7; padding: 0 6px 0 2px; }
.status a { color: #0000d0; text-decoration: none; }
.brand { display: flex; align-items: center; gap: 3px; margin-left: 17px; background: #fafafa; }
.brand svg { width: 18px; height: 16px; }

.watermark {
  position: absolute;
  right: 0;
  bottom: 35px;
  width: 76px;
  overflow: hidden;
  white-space: nowrap;
  pointer-events: none;
  color: rgba(120, 120, 120, .6);
}
.watermark p { margin: 0; font-size: 20px; line-height: 24px; }
.watermark .small { font-size: 14px; line-height: 20px; }
```
